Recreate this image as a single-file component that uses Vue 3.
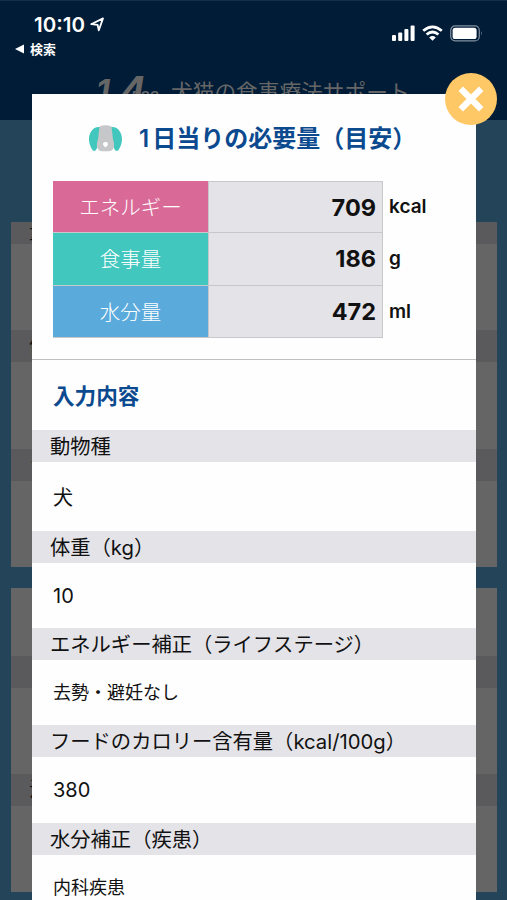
<script setup>
const results = [
  { label: 'エネルギー', value: 709, unit: 'kcal', tone: 'pink' },
  { label: '食事量', value: 186, unit: 'g', tone: 'teal' },
  { label: '水分量', value: 472, unit: 'ml', tone: 'blue' },
]
const inputs = [
  { label: '動物種', value: '犬', size: 'tall' },
  { label: '体重（kg）', value: '10', size: '' },
  { label: 'エネルギー補正（ライフステージ）', value: '去勢・避妊なし', size: 'small' },
  { label: 'フードのカロリー含有量（kcal/100g）', value: '380', size: '' },
  { label: '水分補正（疾患）', value: '内科疾患', size: 'small' },
]
</script>

<template>
  <div class="screen">
    <header class="header">
      <div class="status">
        <div class="status-left">
          <div class="clock">
            <span>10:10</span>
            <svg width="15" height="15" viewBox="0 0 15 15"><path d="M1.2 7.2 13 1.4 8.8 13.3 7.6 7.8Z" fill="none" stroke="#fff" stroke-width="1.8" stroke-linejoin="round" /></svg>
          </div>
          <div class="back">
            <svg width="10" height="10" viewBox="0 0 10 10"><path d="M0 5 9 .5v9Z" fill="#fff" /></svg>
            <span>検索</span>
          </div>
        </div>
        <div class="status-right">
          <svg width="23" height="16" viewBox="0 0 23 16" fill="#fff"><rect x="0" y="10" width="4" height="6" rx="1" /><rect x="6.2" y="7.5" width="4" height="8.5" rx="1" /><rect x="12.4" y="4" width="4" height="12" rx="1" /><rect x="18.6" y="0.5" width="4" height="15.5" rx="1" /></svg>
          <svg width="21" height="16" viewBox="0 0 21 16" fill="none" stroke="#fff" stroke-width="2.8"><path d="M1.2 5.8Q10.5-2 19.8 5.8" /><path d="M4.6 9.5Q10.5 4.6 16.4 9.5" /><path d="M10.5 15.7 7.2 12.4Q10.5 9.7 13.8 12.4Z" fill="#fff" stroke="none" /></svg>
          <svg width="33" height="17" viewBox="0 0 33 17"><rect x=".7" y=".9" width="28.6" height="15" rx="4.5" fill="none" stroke="#8190a0" stroke-width="1.2" /><rect x="2.6" y="2.8" width="24" height="11.2" rx="2.6" fill="#fff" /><path d="M31 6q1.7 2.4 0 4.8Z" fill="#8190a0" /></svg>
        </div>
      </div>
      <div class="brand">
        <span class="brand-one">1</span><span class="brand-four">4</span><span class="brand-small">PSS</span>
        <span class="brand-name">犬猫の食事療法サポート</span>
      </div>
    </header>

    <main class="page">
      <section class="card">
        <div class="band first"><span>量</span></div><div class="gap" />
        <div class="band"><span>体</span></div><div class="gap" />
        <div class="band"><span>ラ</span></div><div class="gap" />
      </section>
      <section class="card">
        <div class="gap short" />
        <div class="band" /><div class="gap" />
        <div class="band"><span>温</span></div><div class="gap" />
      </section>
    </main>

    <div class="modal">
      <button class="close" aria-label="閉じる">
        <svg width="26" height="26" viewBox="0 0 26 26"><path d="M2.8 2.8 23.2 23.2M23.2 2.8 2.8 23.2" stroke="#fff" stroke-width="6.4" /></svg>
      </button>
      <h1 class="title">
        <svg width="33" height="27" viewBox="0 0 33 27">
          <path d="M11 2C4 1 0 8 0 14c0 5 2.500 11 5 12 3 0 4-6 6-13Z" fill="#41c7be" />
          <path d="M22 2c7-1 11 6 11 12 0 5-2.500 11-5 12-3 0-4-6-6-13Z" fill="#41c7be" />
          <path d="M10.500 1.500Q16.500-1 22.500 1.500L24 14.500q1.800 4 .8 7.500-1.300 4.300-5.300 4.300h-6q-4 0-5.300-4.300Q7.200 18.500 9 14.500Z" fill="#c6c7c9" />
          <path d="M14 18.200q2.500-2.500 5 0 .5 1.800-2.500 4.300-3-2.500-2.500-4.300Z" fill="#fff" />
        </svg>
        <span><span class="digit">1</span>日当りの必要量（目安）</span>
      </h1>
      <div class="results">
        <div v-for="r in results" :key="r.label" class="result">
          <div class="label" :class="r.tone">{{ r.label }}</div>
          <div class="value">{{ r.value }}</div>
          <div class="unit">{{ r.unit }}</div>
        </div>
      </div>
      <h2 class="subtitle">入力内容</h2>
      <dl class="inputs">
        <template v-for="i in inputs" :key="i.label">
          <dt>{{ i.label }}</dt>
          <dd :class="i.size">{{ i.value }}</dd>
        </template>
      </dl>
    </div>
  </div>
</template>

<style>
body { margin: 0; }
</style>

<style scoped>
* { box-sizing: border-box; }
.screen {
  position: relative;
  width: 507px;
  height: 900px;
  overflow: hidden;
  background: #244459;
  font-family: Inter, "Noto Sans CJK JP", sans-serif;
  color: #111;
}
svg { display: block; flex: none; }
.header { height: 120px; background: #001c37; border-top: 1px solid #12304a; overflow: hidden; }
.status { display: flex; justify-content: space-between; height: 72px; padding: 12px 24px 0 15px; color: #fff; }
.clock { display: flex; align-items: center; gap: 5px; height: 24px; padding-left: 19px; font-size: 20.500px; font-weight: 600; line-height: 24px; }
.clock svg { margin-top: -2px; }
.back { display: flex; align-items: center; gap: 5px; height: 20px; margin-top: 2px; font-size: 13px; font-weight: 700; line-height: 20px; }
.status-right { display: flex; align-items: center; gap: 7px; height: 20px; margin-top: 10px; }
.brand { display: flex; align-items: flex-start; height: 48px; padding-left: 96px; color: #666; white-space: nowrap; }
.brand-one { width: 24px; padding-top: 2px; font-size: 32px; font-style: italic; font-weight: 700; line-height: 34px; }
.brand-four { width: 22px; font-size: 38px; font-style: italic; font-weight: 700; line-height: 34px; }
.brand-small { width: 29px; margin-left: -11px; padding-top: 14px; font-size: 14px; font-style: italic; font-weight: 600; line-height: 20px; }
.brand-name { margin-left: 11px; padding-top: 4px; font-size: 21.700px; line-height: 30px; }
.page { display: flex; flex-direction: column; gap: 21px; padding: 102px 10px 0 11px; }
.card { background: #656565; overflow: hidden; }
.band { height: 32px; padding-left: 18px; background: #5a5a5c; font-size: 20px; line-height: 32px; }
.band.first { height: 22px; line-height: 20px; }
.gap { height: 86.300px; }
.gap.short { height: 68px; }
.modal { position: absolute; left: 32px; top: 94px; width: 444px; height: 806px; background: #fefefe; }
.close { position: absolute; top: -21px; right: -21px; display: flex; align-items: center; justify-content: center; width: 52px; height: 52px; padding: 0; border: 0; border-radius: 50%; background: #ffc866; }
.title { display: flex; align-items: center; gap: 17px; height: 87px; margin: 0; padding: 2px 0 0 57px; color: #0b4a8f; font-size: 24px; font-weight: 600; line-height: 30px; white-space: nowrap; }
.digit { margin-right: 3px; }
.results { height: 179px; padding-left: 21px; border-bottom: 1px solid #bfbfc1; }
.result { display: flex; height: 52.300px; }
.label, .value { border-right: 1px solid #c8c8cb; border-bottom: 1px solid #c8c8cb; line-height: 54px; }
.label { width: 156px; color: #fff; font-size: 20.500px; font-weight: 300; text-align: center; }
.pink { background: #d96a98; }
.teal { background: #41c7be; }
.blue { background: #5aaadc; }
.value { width: 174px; padding-right: 6px; background: #e4e3e8; font-size: 23.500px; font-weight: 700; line-height: 52px; text-align: right; }
.result:first-child .value { border-top: 1px solid #c8c8cb; line-height: 51px; }
.unit { padding-left: 6px; font-size: 19px; font-weight: 600; line-height: 52px; }
.subtitle { height: 70px; margin: 0; padding: 1px 0 0 21px; color: #0b4a8f; font-size: 21.600px; font-weight: 700; line-height: 70px; }
.inputs { margin: 0; }
dt { height: 32px; padding-left: 18px; background: #e4e3e8; font-size: 20.300px; line-height: 34px; white-space: nowrap; }
dd { height: 65.200px; margin: 0; padding-left: 21px; font-size: 20px; line-height: 67px; }
dd.tall { height: 69px; line-height: 72px; }
dd.small { font-size: 18px; line-height: 66px; }
</style>
